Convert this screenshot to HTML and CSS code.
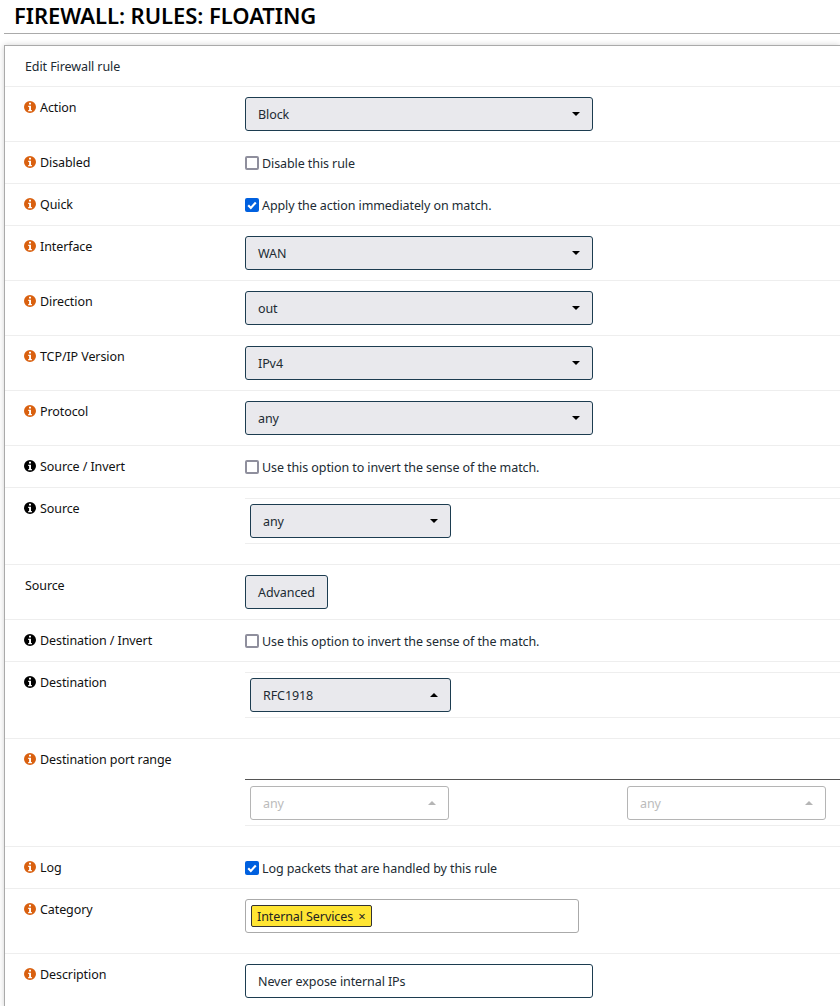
FILE: index.html
```html
<!DOCTYPE html>
<html lang="en">
<head>
<meta charset="utf-8">
<title>Firewall: Rules: Floating</title>
<link rel="stylesheet" href="styles.css">
</head>
<body>
<svg class="defs" width="0" height="0" aria-hidden="true">
  <symbol id="info" viewBox="0 0 12 12">
    <path fill-rule="evenodd" d="M6 0a6 6 0 1 0 0 12A6 6 0 0 0 6 0ZM5 1.7h2V3.6H5ZM4.2 4.7H7v4.2h.9V10.2H4.2V8.9h.9V6h-.9Z"/>
  </symbol>
</svg>
<header class="page-head"><h1>FIREWALL: RULES: FLOATING</h1></header>
<main class="panel">
  <div class="panel-title">Edit Firewall rule</div>

  <div class="row"><div class="label warn"><svg class="icon"><use href="#info"/></svg>Action</div>
    <div class="field"><div class="select"><span>Block</span><i class="caret"></i></div></div></div>

  <div class="row"><div class="label warn"><svg class="icon"><use href="#info"/></svg>Disabled</div>
    <div class="field"><label class="check"><span class="box"></span>Disable this rule</label></div></div>

  <div class="row"><div class="label warn"><svg class="icon"><use href="#info"/></svg>Quick</div>
    <div class="field"><label class="check"><span class="box on"><svg viewBox="0 0 13 13"><path d="M3 6.8 5.4 9.2 10 4.2"/></svg></span>Apply the action immediately on match.</label></div></div>

  <div class="row"><div class="label warn"><svg class="icon"><use href="#info"/></svg>Interface</div>
    <div class="field"><div class="select"><span>WAN</span><i class="caret"></i></div></div></div>

  <div class="row"><div class="label warn"><svg class="icon"><use href="#info"/></svg>Direction</div>
    <div class="field"><div class="select"><span>out</span><i class="caret"></i></div></div></div>

  <div class="row"><div class="label warn"><svg class="icon"><use href="#info"/></svg>TCP/IP Version</div>
    <div class="field"><div class="select"><span>IPv4</span><i class="caret"></i></div></div></div>

  <div class="row"><div class="label warn"><svg class="icon"><use href="#info"/></svg>Protocol</div>
    <div class="field"><div class="select"><span>any</span><i class="caret"></i></div></div></div>

  <div class="row"><div class="label"><svg class="icon"><use href="#info"/></svg>Source / Invert</div>
    <div class="field"><label class="check"><span class="box"></span>Use this option to invert the sense of the match.</label></div></div>

  <div class="row row-nested"><div class="label"><svg class="icon"><use href="#info"/></svg>Source</div>
    <div class="field"><div class="nested"><div class="select small"><span>any</span><i class="caret"></i></div></div></div></div>

  <div class="row"><div class="label plain">Source</div>
    <div class="field"><div class="btn">Advanced</div></div></div>

  <div class="row"><div class="label"><svg class="icon"><use href="#info"/></svg>Destination / Invert</div>
    <div class="field"><label class="check"><span class="box"></span>Use this option to invert the sense of the match.</label></div></div>

  <div class="row row-nested"><div class="label"><svg class="icon"><use href="#info"/></svg>Destination</div>
    <div class="field"><div class="nested"><div class="select small"><span>RFC1918</span><i class="caret up"></i></div></div></div></div>

  <div class="row row-nested"><div class="label warn"><svg class="icon"><use href="#info"/></svg>Destination port range</div>
    <div class="field ports"><div class="nested ruled">
      <div class="select small disabled"><span>any</span><i class="caret up"></i></div>
      <div class="select small disabled"><span>any</span><i class="caret up"></i></div>
    </div></div></div>

  <div class="row"><div class="label warn"><svg class="icon"><use href="#info"/></svg>Log</div>
    <div class="field"><label class="check"><span class="box on"><svg viewBox="0 0 13 13"><path d="M3 6.8 5.4 9.2 10 4.2"/></svg></span>Log packets that are handled by this rule</label></div></div>

  <div class="row row-tall"><div class="label warn"><svg class="icon"><use href="#info"/></svg>Category</div>
    <div class="field"><div class="tags"><span class="tag">Internal Services <b>×</b></span></div></div></div>

  <div class="row"><div class="label warn"><svg class="icon"><use href="#info"/></svg>Description</div>
    <div class="field"><div class="input">Never expose internal IPs</div></div></div>
</main>
</body>
</html>
```

FILE: styles.css
```css
* { box-sizing: border-box; }
html, body { margin: 0; height: 1006px; overflow: hidden; background: #fff; }
body { font-family: "Noto Sans", sans-serif; font-size: 12.5px; line-height: 20px; letter-spacing: -.09px; color: #212b33; }
.defs { position: absolute; }

.page-head { height: 34px; margin-left: 4px; border-bottom: 1px solid #aaa; }
.page-head h1 { margin: 0; padding: 1px 0 0 10px; font-size: 22px; line-height: 28px; font-weight: 600; letter-spacing: -.05px; color: #000; }

.panel { margin: 11px 0 0 4px; border-top: 1px solid #aaa; border-left: 1px solid #aaa; box-shadow: 0 0 6px rgba(0,0,0,.18); }
.panel-title { height: 40px; padding: 11px 0 0 20px; }

.row { display: flex; border-top: 1px solid #eee; padding: 10px 0 10px 20px; }
.label { width: 220px; flex: none; display: flex; align-items: flex-start; align-self: flex-start; height: 20px; line-height: 22px; color: #111; }
.label.warn .icon { color: #d9600f; }
.icon { width: 12px; height: 12px; margin: 4px 4px 0 -1px; flex: none; fill: currentColor; color: #000; }
.field { flex: 1; min-width: 0; }

.select { width: 348px; height: 34px; display: flex; align-items: center; justify-content: space-between; padding: 2px 12px 0; border: 1px solid #1c3c50; border-radius: 3px; background: #e9e9ed; }
.caret { width: 0; height: 0; margin-top: -2px; border: 4px solid transparent; border-top: 4px solid #000; border-bottom: 0; }
.caret.up { border-top: 0; border-bottom: 4px solid #000; }
.select.small { width: 201px; }
.select.disabled { width: 199px; background: #fff; border-color: #b5b5b5; color: #bbb; }
.select.disabled .caret { border-bottom-color: #b5b5b5; }

.check { display: flex; align-items: center; height: 22px; margin-bottom: -1px; padding-top: 2px; }
.box { width: 14px; height: 14px; margin: -2px 3px 0 0; flex: none; border: 2px solid #8f8f9d; border-radius: 2px; background: #fff; }
.box.on { border: 0; background: #0060df; }
.box svg { display: block; width: 14px; height: 14px; fill: none; stroke: #fff; stroke-width: 2; }

.nested { border-top: 1px solid #eee; border-bottom: 1px solid #eee; padding: 5px; margin-bottom: 10px; }
.nested.ruled { display: flex; gap: 178px; border-top: 1px solid #555; padding: 6px 5px 5px; margin-top: 30px; }

.btn { width: 83px; height: 34px; display: flex; align-items: center; justify-content: center; padding-top: 2px; border: 1px solid #1c3c50; border-radius: 3px; background: #e9e9ed; }

.row-tall { padding-bottom: 20px; }
.tags { width: 334px; height: 34px; padding: 5px; border: 1px solid #aaa; border-radius: 3px; }
.tag { display: inline-flex; align-items: center; height: 22px; padding: 2px 5px 0; border: 1px solid #333; border-radius: 2px; background: #ffe533; color: #222; white-space: pre; }
.tag b { font-weight: 400; font-size: 13px; margin: -2px 0 0 2px; }

.input { width: 348px; height: 34px; display: flex; align-items: center; padding: 2px 12px 0; border: 1px solid #1c3c50; border-radius: 3px; background: #fff; }
```
